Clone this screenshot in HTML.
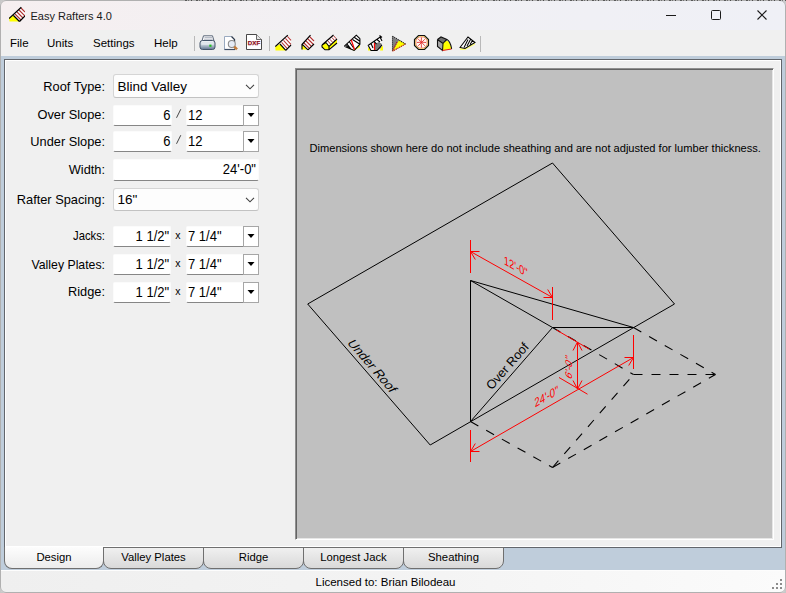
<!DOCTYPE html>
<html><head><meta charset="utf-8">
<style>
*{box-sizing:border-box;margin:0;padding:0}
html,body{width:786px;height:593px;overflow:hidden;background:#f0f0f0;font-family:"Liberation Sans",sans-serif;color:#000}
.a{position:absolute}
#title{left:0;top:0;width:786px;height:30px;background:linear-gradient(90deg,#f6eff0 0%,#f1f0f4 50%,#eff0f6 100%)}
#menu{left:0;top:30px;width:786px;height:26px;background:#f0f0f0}
.mi{position:absolute;top:35px;font-size:11.5px;line-height:16px}
#band{left:1px;top:56px;width:784px;height:514px;background:#bfcddb}
#page{left:4px;top:59px;width:778px;height:489px;background:#f0f0f0;border-top:1px solid #62666c;border-left:1px solid #62666c;border-right:1px solid #62666c;border-bottom:1px solid #62666c}
#pagein{left:5px;top:60px;width:776px;height:487px;border-top:1px solid #fff;border-left:1px solid #fff;border-right:1px solid #fff;border-bottom:1px solid #fff}
.lbl{position:absolute;font-size:12.8px;line-height:16px;text-align:right;width:120px;left:-15px}
.tb{position:absolute;background:#fff;border:1px solid #fbfbfb;border-bottom:1px solid #868686;font-size:12.8px;line-height:16px;border-radius:2px}
.cb{position:absolute;background:#fdfdfd;border:1px solid #d5d5d5;border-bottom-color:#c2c2c2;font-size:13.5px;line-height:16px;border-radius:3px}
.dd{position:absolute;background:#fff;border:1px solid #a6a6a6}
#gfx{left:295px;top:68px;width:479px;height:472px;background:#c0c0c0;border-top:1px solid #8f8f8f;border-left:1px solid #8f8f8f;border-right:1px solid #fff;border-bottom:1px solid #fff;box-shadow:inset 1px 1px 0 #646464,inset -1px -1px 0 #e6e6e6}
.tab{position:absolute;top:547px;height:22px;width:101px;border:1px solid #6f6f6f;border-radius:0 0 8px 8px;background:linear-gradient(#f0f0f0,#d9d9d9);font-size:11.3px;line-height:18px;text-align:center}
#status{left:1px;top:570px;width:784px;height:22px;background:linear-gradient(90deg,#efefef,#f3f3f3 50%,#fbfbfb);border-top:1px solid #fdfdfd}
</style></head><body>
<div id="title" class="a"></div>
<div class="a" style="left:0;top:0;width:786px;height:593px;border:1px solid #b0b0b0;border-radius:6px;pointer-events:none;z-index:50;box-shadow:0 0 0 3px #c8c8c8"></div>
<div class="a" style="left:185px;top:0;width:601px;height:1px;background:repeating-linear-gradient(90deg,#3a3a3a 0 2px,transparent 2px 3px,#5a5a5a 3px 4px,transparent 4px 6px,#2a2a2a 6px 7px,transparent 7px 11px);opacity:.75;z-index:51"></div>
<!-- app icon -->
<svg class="a" style="left:9px;top:6px" width="16" height="16" viewBox="0 0 16 16">
<polygon points="0,12 4.5,9 10.5,15.5 0.5,15.5" fill="#ffff00"/>
<polygon points="4.5,9.5 12.3,1.3 16,5 16,10 10.5,15.5" fill="#fff"/>
<g stroke="#b03030" stroke-width="1.1">
<line x1="6" y1="8" x2="12" y2="14"/><line x1="8" y1="6" x2="14" y2="12"/><line x1="10" y1="4" x2="16" y2="10"/><line x1="12" y1="2" x2="16" y2="6"/>
</g>
<g stroke="#000" stroke-width="1.2" fill="none"><path d="M0,12.5 L12.3,1.3 M4.5,9.5 L10.5,15.5 M16,10 L10.5,15.5"/></g>
</svg>
<div class="a" style="left:30.5px;top:8.5px;font-size:11px;line-height:14px;color:#1a1a1a">Easy Rafters 4.0</div>
<!-- window controls -->
<div class="a" style="left:666px;top:15px;width:10px;height:1px;background:#1a1a1a"></div>
<div class="a" style="left:711px;top:10px;width:10px;height:10px;border:1px solid #1a1a1a;border-radius:1.5px"></div>
<svg class="a" style="left:757px;top:10px" width="10" height="10" viewBox="0 0 10 10"><path d="M0.5,0.5 L9.5,9.5 M9.5,0.5 L0.5,9.5" stroke="#1a1a1a" stroke-width="1.1"/></svg>

<div id="menu" class="a"></div>
<div class="mi" style="left:10px">File</div>
<div class="mi" style="left:47px">Units</div>
<div class="mi" style="left:93px">Settings</div>
<div class="mi" style="left:154px">Help</div>


<!-- toolbar -->
<div class="a" style="left:194px;top:36px;width:1px;height:15px;background:#b9b9b9"></div>
<div class="a" style="left:269px;top:36px;width:1px;height:15px;background:#b9b9b9"></div>
<div class="a" style="left:480px;top:36px;width:1px;height:16px;background:#b9b9b9"></div>
<svg class="a" style="left:199px;top:35px" width="17" height="16" viewBox="0 0 17 16">
<defs><linearGradient id="pg" x1="0" y1="0" x2="0" y2="1"><stop offset="0" stop-color="#f4f7fa"/><stop offset="0.45" stop-color="#c8d2dc"/><stop offset="1" stop-color="#5f7590"/></linearGradient></defs>
<path d="M4.5,0.8 L13.5,0.8 L15,5.8 L3,5.8 Z" fill="#fff" stroke="#5a6778" stroke-width="1"/>
<path d="M5.5,2.6 L13,2.6 M5,4.2 L13.8,4.2" stroke="#9aa4b2" stroke-width="0.8"/>
<rect x="1" y="5.5" width="15" height="9" rx="2.5" fill="url(#pg)" stroke="#44546a" stroke-width="1"/>
<rect x="2.5" y="8.5" width="12" height="1" fill="#eef2f6"/>
<rect x="10.3" y="9.6" width="2.2" height="2.2" fill="#22c022"/>
</svg>
<svg class="a" style="left:223px;top:35px" width="17" height="16" viewBox="0 0 17 16">
<path d="M1.5,1.5 L8.5,1.5 L11.5,4.5 L11.5,14.5 L1.5,14.5 Z" fill="#fff" stroke="#9aaac0" stroke-width="1"/>
<path d="M1.5,14.5 L12,14.5" stroke="#3e4d63" stroke-width="1.2"/>
<path d="M8.5,1.5 L11.5,4.5 L11.5,7" stroke="#2e3a4c" stroke-width="1.3" fill="none"/>
<circle cx="8.8" cy="9" r="3.5" fill="#e6ecf6" stroke="#8c8c8c" stroke-width="1.1"/>
<path d="M11.2,11.6 L14,14.4" stroke="#c27b3a" stroke-width="2.6"/>
</svg>
<svg class="a" style="left:245px;top:34px" width="18" height="17" viewBox="0 0 18 17">
<path d="M1.5,0.5 L11.5,0.5 L16.5,5.5 L16.5,15.5 L1.5,15.5 Z" fill="#fff" stroke="#333" stroke-width="0.9"/>
<path d="M11.5,0.5 L11.5,5.5 L16.5,5.5" fill="#e6e6e6" stroke="#444" stroke-width="0.8"/>
<text x="9" y="11.3" font-family="Liberation Sans" font-weight="bold" font-size="6.2" fill="#8e1020" stroke="#8e1020" stroke-width="0.25" text-anchor="middle">DXF</text>
</svg>
<svg class="a" style="left:275px;top:34px" width="17" height="17" viewBox="0 0 17 17">
<polygon points="0.3,12.8 5,10 10.8,16.6 0.5,16.6" fill="#ffff00"/>
<polygon points="5,10 12.8,1.5 16,5 16,11 10.8,16.3" fill="#fff"/>
<g stroke="#b83838" stroke-width="1.05"><path d="M6.6,8.4 L12.3,14.6 M8.5,6.4 L14.2,12.6 M10.4,4.4 L16,10.4 M12.4,2.4 L16,6.3"/></g>
<path d="M0.3,12.6 L12.8,1.2 M5,10 L10.8,16.3 M16,11 L10.8,16.3" stroke="#000" stroke-width="1.15" fill="none"/>
</svg><svg class="a" style="left:301px;top:34px" width="17" height="17" viewBox="0 0 17 17">
<polygon points="1,10 6,15.5 1,15.5" fill="#ffff00"/>
<polygon points="1,10 9.5,1.5 13,5 13,10 7,15.5" fill="#fff"/>
<g stroke="#b03030" stroke-width="1.1"><path d="M2.5,8.5 L8.5,14.5 M4.5,6.5 L10.5,12.5 M6.5,4.5 L12.5,10.5 M8.5,2.5 L13,7"/></g>
<path d="M1,10.5 L9.5,1.2 M1,10.2 L7,15.8 M1,10 L1,15.5 M13,10 L7,15.8" stroke="#000" stroke-width="1.15" fill="none"/>
</svg><svg class="a" style="left:321px;top:34px" width="17" height="17" viewBox="0 0 17 17">
<polygon points="1,11 5,8.5 8,12.5 8,15.5 4,15.5 1,13" fill="#ffff00"/>
<polygon points="8,12.5 16,5 16,9 8,15.5" fill="#ffff00"/>
<polygon points="5,8.5 12.5,1.5 16,5 8,12.5" fill="#fff"/>
<g stroke="#b03030" stroke-width="1"><path d="M6.8,7 L9.8,10.3 M8.8,5.2 L11.8,8.5 M10.8,3.4 L13.8,6.7 M12.6,1.8 L15.3,4.8"/></g>
<path d="M1,11 L12.5,1 M16,9 L8,15.8 L4,15.8 L1,13 L1,11 M5,8.5 L8,12.5 L16,5 M8,12.5 L8,15.8 M1,11 L5,8.5" stroke="#000" stroke-width="1.1" fill="none"/>
</svg><svg class="a" style="left:344px;top:34px" width="17" height="17" viewBox="0 0 17 17">
<polygon points="1,12 12,2 16,6 16,11 10,16" fill="#fff"/>
<polygon points="3,14 10,16 16,11 16,13 10,16.5" fill="#ffff00"/>
<g stroke="#000" stroke-width="1.1" fill="none"><path d="M0.3,12.2 L12.3,1.2 L15.9,4.6 M15.9,4.6 L15.9,10.2 L10.3,16.4 M0.3,12.2 L10.3,16.4 M3,10 L7,15 M5.5,8 L10,14.5 M8.5,5.5 L15.9,10.2 M10.5,3.5 L15.9,7.3 M2,11.5 L6,13.5"/></g>
<path d="M7.2,5.7 L10.6,15.8" stroke="#ff0000" stroke-width="1.2"/>
</svg><svg class="a" style="left:367px;top:34px" width="17" height="18" viewBox="0 0 17 18">
<polygon points="1,13 4,16.5 1,16.5" fill="#ffff00"/><polygon points="14,13 16,12 16,16.5 13,16.5" fill="#ffff00"/>
<polygon points="1,11 12,4 15,7 14,13 10,16.5 4,16.5" fill="#fff"/>
<polygon points="7.5,10 12,8 15,10 14,14 10,16.5 7.5,16.5" fill="#7a7a7a"/>
<g stroke="#000" stroke-width="1.1" fill="none"><path d="M1,11.5 L14,2.5 M1,11 L4,16.5 L10,16.5 L15,11 M4,9.5 L6,14 M7,7.5 L9.5,10 M10,5.5 L13,8 M13,3 L15,7 M12.5,1.5 L15,3.5"/></g>
<path d="M7.5,9 L7.5,16" stroke="#ff0000" stroke-width="1.3"/>
</svg><svg class="a" style="left:391px;top:35px" width="16" height="17" viewBox="0 0 16 17">
<polygon points="1.5,1.5 14.5,9 1.5,16" fill="#808080"/>
<polygon points="8,5.25 14.5,9 1.5,16" fill="#ffff00"/>
<path d="M1.5,1.2 L1.5,16 M1.5,1.2 L14.5,9" stroke="#222" stroke-width="1.1" stroke-dasharray="1.2 0.8"/>
<path d="M14.5,9 L1.5,16.2 M6,7 L1.5,16" stroke="#b01010" stroke-width="1.1" stroke-dasharray="1.2 0.8"/>
</svg><svg class="a" style="left:413px;top:34px" width="17" height="17" viewBox="0 0 17 17">
<polygon points="5.5,1.5 11.5,1.5 15.5,5.5 15.5,11.5 11.5,15.5 5.5,15.5 1.5,11.5 1.5,5.5" fill="#ffff90" stroke="#111" stroke-width="1.2"/>
<polygon points="6,3 11,3 14,6 14,11 11,14 6,14 3,11 3,6" fill="#fff8f0" stroke="#e04040" stroke-width="0.6"/>
<g stroke="#e02020" stroke-width="0.8" fill="none"><path d="M8.5,3.5 Q7.8,8.5 8.5,13.5 M4,8.5 Q8.5,7.8 13,8.5 M5.2,5.2 Q8.8,8.2 11.8,11.8 M11.8,5.2 Q8.2,8.8 5.2,11.8"/></g>
</svg><svg class="a" style="left:436px;top:36px" width="17" height="16" viewBox="0 0 17 16">
<polygon points="1.5,3.5 5,1 11,3.5 7,7.5 6,14 1.5,10.5" fill="#a8a8a8"/>
<polygon points="5,1 11,3.5 7,7.5 1.5,3.5" fill="#707070"/>
<path d="M7,7.5 Q11,2 14,8 L15.5,12.5 L10,14 L6.5,14.5 Z" fill="#ffff00"/>
<path d="M1.5,3.5 L5,1 L11,3.5 Q14,5 15.5,12 L15.5,13 M7,7.5 L6.5,14.5 L1.5,10.5 L1.5,3.5 M1.5,3.5 L7,7.5 Q10,4 11,3.5" stroke="#111" stroke-width="1.1" fill="none"/>
<path d="M6.5,14.5 L15.5,13" stroke="#e02020" stroke-width="1.1"/>
</svg><svg class="a" style="left:459px;top:35px" width="17" height="16" viewBox="0 0 17 16">
<polygon points="1,13 6,13.5 16,8 16,9.5 6,15 1,15" fill="#ffff70"/>
<polygon points="1,12.5 9,2 16,7.5 6,13.5" fill="#fff"/>
<path d="M1,12.5 L9,2 L16,7.5 L6,13.5 Z M5,12.5 L9,4.5 M8,11 L11.5,4.5 M11,9.5 L13.5,5.5" stroke="#000" stroke-width="1.05" fill="none"/>
</svg>
<div id="band" class="a"></div>
<div id="page" class="a"></div>
<div id="pagein" class="a"></div>


<!-- form -->
<div class="lbl" style="top:78.6px">Roof Type:</div>
<div class="cb" style="left:113px;top:74px;width:146px;height:24px"></div>
<div class="a" style="left:117.5px;top:78.9px;font-size:13.5px;line-height:16px;color:#000">Blind Valley</div>
<svg class="a" style="left:245px;top:84px" width="10" height="6" viewBox="0 0 10 6"><path d="M1,0.8 L5,4.8 L9,0.8" stroke="#404040" stroke-width="1.1" fill="none"/></svg>

<div class="lbl" style="top:107.1px">Over Slope:</div>
<div class="tb" style="left:113px;top:105px;width:59px;height:21px"></div>
<div class="a" style="left:113px;top:107px;width:57.5px;text-align:right;font-size:14px;line-height:16px;transform:scaleX(.93);transform-origin:right">6</div>
<svg class="a" style="left:175px;top:108px" width="7" height="11"><path d="M1.5,9.8 L5.8,1.2" stroke="#333" stroke-width="0.9"/></svg>
<div class="tb" style="left:186px;top:105px;width:73px;height:21px"></div>
<div class="a" style="left:188px;top:107px;font-size:14px;line-height:16px;transform:scaleX(.93);transform-origin:left">12</div>
<div class="dd" style="left:243px;top:105px;width:16px;height:21px"></div>
<svg class="a" style="left:247px;top:112px" width="8" height="6"><path d="M0.5,1 L7.5,1 L4,5 Z" fill="#000"/></svg>

<div class="lbl" style="top:134.1px">Under Slope:</div>
<div class="tb" style="left:113px;top:131px;width:59px;height:21px"></div>
<div class="a" style="left:113px;top:133px;width:57.5px;text-align:right;font-size:14px;line-height:16px;transform:scaleX(.93);transform-origin:right">6</div>
<svg class="a" style="left:175px;top:134px" width="7" height="11"><path d="M1.5,9.8 L5.8,1.2" stroke="#333" stroke-width="0.9"/></svg>
<div class="tb" style="left:186px;top:131px;width:73px;height:21px"></div>
<div class="a" style="left:188px;top:133px;font-size:14px;line-height:16px;transform:scaleX(.93);transform-origin:left">12</div>
<div class="dd" style="left:243px;top:131px;width:16px;height:21px"></div>
<svg class="a" style="left:247px;top:138px" width="8" height="6"><path d="M0.5,1 L7.5,1 L4,5 Z" fill="#000"/></svg>

<div class="lbl" style="top:162.1px">Width:</div>
<div class="tb" style="left:113px;top:159px;width:146px;height:22px"></div>
<div class="a" style="left:113px;top:161.3px;width:143px;text-align:right;font-size:14px;line-height:16px;transform:scaleX(.93);transform-origin:right">24'-0"</div>

<div class="lbl" style="top:191.8px">Rafter Spacing:</div>
<div class="cb" style="left:113px;top:188px;width:146px;height:23px"></div>
<div class="a" style="left:117.5px;top:191.5px;font-size:13.5px;line-height:16px">16"</div>
<svg class="a" style="left:245px;top:197px" width="10" height="6" viewBox="0 0 10 6"><path d="M1,0.8 L5,4.8 L9,0.8" stroke="#404040" stroke-width="1.1" fill="none"/></svg>

<div class="lbl" style="top:228.3px;transform:scaleX(.88);transform-origin:right">Jacks:</div>
<div class="tb" style="left:113px;top:226px;width:58px;height:21px"></div>
<div class="a" style="left:113px;top:228px;width:56.2px;text-align:right;font-size:14px;line-height:16px;transform:scaleX(.93);transform-origin:right">1 1/2"</div>
<div class="a" style="left:175.3px;top:227.3px;font-size:10.5px;line-height:16px">x</div>
<div class="tb" style="left:186px;top:226px;width:73px;height:21px"></div>
<div class="a" style="left:188px;top:228px;font-size:14px;line-height:16px;transform:scaleX(.93);transform-origin:left">7 1/4"</div>
<div class="dd" style="left:243px;top:226px;width:16px;height:21px"></div>
<svg class="a" style="left:247px;top:233px" width="8" height="6"><path d="M0.5,1 L7.5,1 L4,5 Z" fill="#000"/></svg>

<div class="lbl" style="top:256.6px;transform:scaleX(.96);transform-origin:right">Valley Plates:</div>
<div class="tb" style="left:113px;top:254px;width:58px;height:21px"></div>
<div class="a" style="left:113px;top:256px;width:56.2px;text-align:right;font-size:14px;line-height:16px;transform:scaleX(.93);transform-origin:right">1 1/2"</div>
<div class="a" style="left:175.3px;top:255.3px;font-size:10.5px;line-height:16px">x</div>
<div class="tb" style="left:186px;top:254px;width:73px;height:21px"></div>
<div class="a" style="left:188px;top:256px;font-size:14px;line-height:16px;transform:scaleX(.93);transform-origin:left">7 1/4"</div>
<div class="dd" style="left:243px;top:254px;width:16px;height:21px"></div>
<svg class="a" style="left:247px;top:261px" width="8" height="6"><path d="M0.5,1 L7.5,1 L4,5 Z" fill="#000"/></svg>

<div class="lbl" style="top:283.9px">Ridge:</div>
<div class="tb" style="left:113px;top:282px;width:58px;height:21px"></div>
<div class="a" style="left:113px;top:284px;width:56.2px;text-align:right;font-size:14px;line-height:16px;transform:scaleX(.93);transform-origin:right">1 1/2"</div>
<div class="a" style="left:175.3px;top:283.3px;font-size:10.5px;line-height:16px">x</div>
<div class="tb" style="left:186px;top:282px;width:73px;height:21px"></div>
<div class="a" style="left:188px;top:284px;font-size:14px;line-height:16px;transform:scaleX(.93);transform-origin:left">7 1/4"</div>
<div class="dd" style="left:243px;top:282px;width:16px;height:21px"></div>
<svg class="a" style="left:247px;top:289px" width="8" height="6"><path d="M0.5,1 L7.5,1 L4,5 Z" fill="#000"/></svg>

<div id="gfx" class="a"></div>
<div class="a" style="left:309.5px;top:141px;font-size:11.1px;line-height:14px">Dimensions shown here do not include sheathing and are not adjusted for lumber thickness.</div>
<svg class="a" style="left:0;top:0" width="786" height="593" viewBox="0 0 786 593">
<g stroke="#000" stroke-width="1.0" fill="none">
<polygon points="552.5,163 674.5,304 430.2,445 307.7,304"/>
<path d="M470.5,280.5 L470.5,421.5 M470.5,280.5 L552.5,327.5 M470.5,280.5 L633.5,327.5 M552.5,327.5 L633.5,327.5 M470.5,421.5 L552.5,327.5"/>
</g>
<g stroke="#000" stroke-width="1.1" fill="none" stroke-dasharray="9 9">
<path d="M470.5,421.5 L552.5,467.5"/>
<path d="M552.5,467.5 L633.5,374.5"/>
<path d="M552.5,467.5 L715.5,374.5"/>
<path d="M633.5,374.5 L715.5,374.5"/>
<path d="M633.5,327.5 L715.5,374.5"/>
<path d="M552.5,327.5 L633.5,374.5"/>
</g>
<g stroke="#ff0000" stroke-width="1" fill="none">
<path d="M470.5,240 L470.5,273 M552.5,287 L552.5,320"/>
<path d="M470.5,251.5 L552.5,297.5 M479.5,251.5 L470.5,251.5 L475.3,259.5 M543.5,297.5 L552.5,297.5 L547.7,289.5"/>
<path d="M470.5,430 L470.5,462 M633.5,335 L633.5,369"/>
<path d="M470.5,451.5 L633.5,357.5 M479.5,451.5 L470.5,451.5 L475.3,443.5 M624.5,357.5 L633.5,357.5 L628.7,365.5"/>
<path d="M556.5,330 L589,349 M559,377.5 L587.5,394.2"/>
<path d="M577.5,342 L577.5,389 M573,350.5 L577.5,342 L582,350.5 M573,380.5 L577.5,389 L582,380.5"/>
</g>
<g font-family="Liberation Sans" fill="#000">
<text font-size="12.6" transform="matrix(0.657,-0.754,0.754,0.657,491.8,390.6)">Over Roof</text>
<text font-size="13" transform="matrix(0.658,0.754,-0.90,0.42,346.5,342.8)">Under Roof</text>
</g>
<g font-family="Liberation Sans" fill="#ff0000">
<text font-size="11" transform="matrix(0.85,0.477,0.04,1.12,504,264)">12'-0"</text>
<text font-size="11" transform="matrix(0.85,-0.49,0.12,1.12,535,407.5)">24'-0"</text>
<text font-size="11" transform="matrix(0,-1,0.866,0.5,572.3,380)">6'-0"</text>
</g>
</svg>

<div class="tab" style="left:4px;width:100px;border-top:none;line-height:20px;background:linear-gradient(#fdfdfd,#ececec)">Design</div>
<div class="tab" style="left:103px">Valley Plates</div>
<div class="tab" style="left:203px">Ridge</div>
<div class="tab" style="left:303px">Longest Jack</div>
<div class="tab" style="left:403px">Sheathing</div>
<div id="status" class="a"></div>
<div class="a" style="left:315.5px;top:574.5px;font-size:11.5px;line-height:14px">Licensed to: Brian Bilodeau</div>
<svg class="a" style="left:771px;top:577px" width="14" height="14"><g fill="#8c8c8c"><rect x="9" y="2" width="2" height="2"/><rect x="5" y="6" width="2" height="2"/><rect x="9" y="6" width="2" height="2"/><rect x="1" y="10" width="2" height="2"/><rect x="5" y="10" width="2" height="2"/><rect x="9" y="10" width="2" height="2"/></g></svg>
</body></html>
